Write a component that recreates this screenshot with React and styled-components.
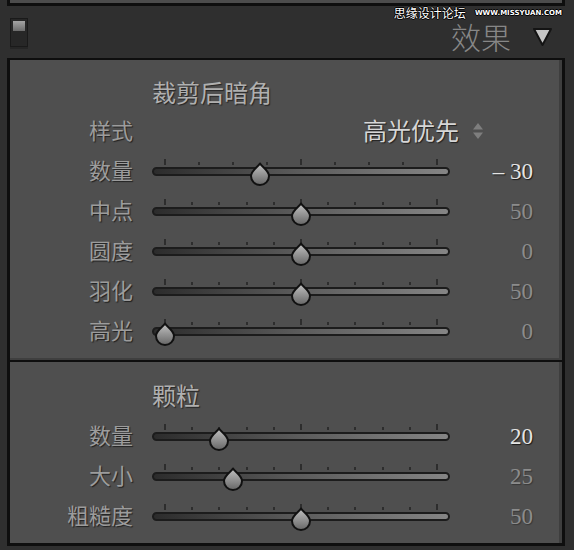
import React from 'react';
import styled, { createGlobalStyle } from 'styled-components';

const GlobalStyle = createGlobalStyle`
  html, body {
    margin: 0;
    padding: 0;
    background: #2f2f2f;
  }
  body {
    width: 574px;
    height: 550px;
    overflow: hidden;
    font-family: "Noto Sans CJK SC", "Noto Sans", sans-serif;
  }
`;

const Page = styled.div`
  position: relative;
  width: 574px;
  height: 550px;
  background: #2f2f2f;
`;

// edge of the panel above, cut off by the screenshot
const TopEdge = styled.div`
  margin-left: 7px;
  width: 558px;
  height: 6px;
  box-sizing: border-box;
  background: #4c4c4c;
  border: 3px solid #0e0e0e;
  border-top: none;
`;

const Header = styled.div`
  height: 52px;
  display: flex;
  justify-content: space-between;
  align-items: flex-start;
`;

const Switch = styled.div`
  margin: 12px 0 0 10px;
  width: 18px;
  height: 29px;
  box-sizing: border-box;
  padding: 2px;
  background: #272727;
  border: 1px solid #1a1a1a;
  box-shadow: 0 2px 0 #262626;
`;

const SwitchKnob = styled.div`
  height: 10px;
  background: linear-gradient(#a4a4a4, #6c6c6c);
`;

const HeaderRight = styled.div`
  margin-top: 15px;
  padding-right: 21px;
  display: flex;
  align-items: center;
  gap: 21px;
`;

const HeaderTitle = styled.span`
  height: 30px;
  font-size: 30px;
  line-height: 30px;
  color: #878787;
  font-weight: 300;
`;

const Watermark = styled.div`
  position: absolute;
  top: 7px;
  right: 12px;
  height: 12px;
  display: flex;
  align-items: center;
  gap: 9px;
  color: #fff;
  text-shadow: 1px 0 0 #000, -1px 0 0 #000, 0 1px 0 #000, 0 -1px 0 #000;
`;

const WatermarkCn = styled.span`
  font-size: 12px;
  line-height: 12px;
`;

const WatermarkUrl = styled.span`
  font-family: "DejaVu Sans", sans-serif;
  font-size: 7px;
  font-weight: bold;
  line-height: 12px;
`;

const Panel = styled.div`
  margin-left: 7px;
  width: 558px;
  box-sizing: border-box;
  border: 3px solid #0e0e0e;
  border-top-width: 2px;
  background: #4f4f4f;
  box-shadow: inset -3px 0 0 #3e3e3e;
`;

const Section = styled.section`
  padding: ${p => (p.$last ? '20px 0 7px' : '19px 0 9px')};
  border-bottom: ${p => (p.$last ? 'none' : '2px solid #0e0e0e')};
  box-shadow: ${p => (p.$last ? 'none' : 'inset 0 -2px 0 #3f3f3f')};
`;

const SectionTitle = styled.div`
  margin: 0 0 ${p => p.$gap}px 142px;
  height: 30px;
  font-size: 24px;
  line-height: 26px;
  color: #b0b0b0;
  text-shadow: 1px 1px 1px rgba(0, 0, 0, 0.55);
`;

const Row = styled.div`
  height: 40px;
  display: flex;
  align-items: center;
`;

const Label = styled.div`
  width: 123px;
  height: 40px;
  margin-right: 19px;
  text-align: right;
  font-size: 22px;
  line-height: 37px;
  color: #9c9c9c;
  text-shadow: 1px 1px 1px rgba(0, 0, 0, 0.6);
`;

const Select = styled.div`
  width: 381px;
  height: 40px;
  padding-right: 49px;
  box-sizing: border-box;
  display: flex;
  justify-content: flex-end;
  align-items: center;
  gap: 13px;
`;

const SelectText = styled.span`
  height: 40px;
  font-size: 24px;
  line-height: 37px;
  color: #d6d6d6;
  text-shadow: 1px 1px 1px rgba(0, 0, 0, 0.6);
`;

const SliderBox = styled.div`
  position: relative;
  width: 298px;
  height: 25px;
  display: flex;
  flex-direction: column;
`;

const Ticks = styled.div`
  height: 6px;
  margin-bottom: 2px;
  padding: 0 12px;
  display: flex;
  justify-content: space-between;
  align-items: flex-end;
`;

const Tick = styled.span`
  width: 2px;
  height: ${p => (p.$major ? 6 : 3)}px;
  background: #2d2d2d;
`;

const Track = styled.div`
  height: 9px;
  box-sizing: border-box;
  border: 2px solid #1c1c1c;
  border-radius: 5px;
  background: linear-gradient(to right, #2c2c2c, #5c5c5c 50%, #858585);
`;

const Thumb = styled.svg`
  position: absolute;
  top: 3px;
  width: 22px;
  height: 24px;
`;

const Value = styled.div`
  width: 83px;
  text-align: right;
  font-family: "Liberation Serif", serif;
  font-size: 23px;
  line-height: 39px;
  color: ${p => (p.$bright ? '#e4e4e4' : '#8c8c8c')};
  text-shadow: 1px 1px 1px rgba(0, 0, 0, ${p => (p.$bright ? 0.7 : 0.3)});
`;

const Slider = ({ id, frac, ticks }) => {
  const mid = (ticks - 1) / 2;
  return (
    <SliderBox>
      <Ticks>
        {Array.from({ length: ticks }, (_, i) => (
          <Tick key={i} $major={i === 0 || i === ticks - 1 || i === mid} />
        ))}
      </Ticks>
      <Track />
      <Thumb viewBox="0 0 22 24" style={{ left: 13 + frac * 272 - 11 }}>
        <defs>
          <linearGradient id={`thumb-${id}`} x1="0" y1="0" x2="0" y2="1">
            <stop offset="0" stopColor="#c2c2c2" />
            <stop offset="1" stopColor="#666" />
          </linearGradient>
        </defs>
        <path
          d="M11 1.5 C12.6 4.5 20 8.5 20 14 A9 9 0 0 1 2 14 C2 8.5 9.4 4.5 11 1.5 Z"
          fill={`url(#thumb-${id})`}
          stroke="#111"
          strokeWidth="2"
          strokeLinejoin="round"
        />
      </Thumb>
    </SliderBox>
  );
};

const vignette = [
  { label: '数量', frac: 0.35, ticks: 9, value: '– 30', bright: true },
  { label: '中点', frac: 0.5, ticks: 11, value: '50' },
  { label: '圆度', frac: 0.5, ticks: 11, value: '0' },
  { label: '羽化', frac: 0.5, ticks: 11, value: '50' },
  { label: '高光', frac: 0, ticks: 11, value: '0' },
];

const grain = [
  { label: '数量', frac: 0.2, ticks: 11, value: '20', bright: true },
  { label: '大小', frac: 0.25, ticks: 11, value: '25' },
  { label: '粗糙度', frac: 0.5, ticks: 11, value: '50' },
];

const SliderRow = ({ id, item }) => (
  <Row>
    <Label>{item.label}</Label>
    <Slider id={id} frac={item.frac} ticks={item.ticks} />
    <Value $bright={item.bright}>{item.value}</Value>
  </Row>
);

export default function App() {
  return (
    <Page>
      <GlobalStyle />
      <TopEdge />
      <Header>
        <Switch>
          <SwitchKnob />
        </Switch>
        <HeaderRight>
          <HeaderTitle>效果</HeaderTitle>
          <svg width="21" height="21" viewBox="0 0 21 21">
            <polygon
              points="2,3 19,3 10.5,19"
              fill="#c6c6c6"
              stroke="#141414"
              strokeWidth="2"
              strokeLinejoin="round"
            />
          </svg>
        </HeaderRight>
      </Header>
      <Watermark>
        <WatermarkCn>思缘设计论坛</WatermarkCn>
        <WatermarkUrl>WWW.MISSYUAN.COM</WatermarkUrl>
      </Watermark>

      <Panel>
        <Section>
          <SectionTitle $gap={2}>裁剪后暗角</SectionTitle>
          <Row>
            <Label>样式</Label>
            <Select>
              <SelectText>高光优先</SelectText>
              <svg width="12" height="18" viewBox="0 0 12 18">
                <polygon points="6,1 11,7.5 1,7.5" fill="#7e7e7e" />
                <polygon points="1,10.5 11,10.5 6,17" fill="#7e7e7e" />
              </svg>
            </Select>
          </Row>
          {vignette.map((item, i) => (
            <SliderRow key={item.label} id={`v${i}`} item={item} />
          ))}
        </Section>
        <Section $last>
          <SectionTitle $gap={4}>颗粒</SectionTitle>
          {grain.map((item, i) => (
            <SliderRow key={item.label} id={`g${i}`} item={item} />
          ))}
        </Section>
      </Panel>
    </Page>
  );
}
